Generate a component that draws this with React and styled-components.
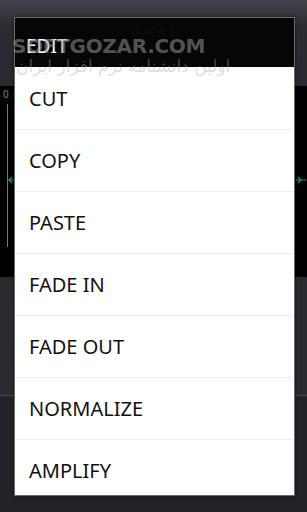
import React from "react";
import styled, { createGlobalStyle } from "styled-components";

const GlobalStyle = createGlobalStyle`
  html, body {
    margin: 0;
    padding: 0;
    background: #232127;
  }
  body {
    font-family: "Noto Sans", "Open Sans", "DejaVu Sans", sans-serif;
  }
`;

const Screen = styled.div`
  position: relative;
  width: 307px;
  height: 512px;
  overflow: hidden;
  display: flex;
  flex-direction: column;
`;

const Header = styled.div`
  height: 86px;
  background: linear-gradient(#45424b, #2e2b33 30%, #2a2830);
`;

const Track = styled.div`
  height: 191px;
  background: #000;
  display: flex;
  justify-content: space-between;
`;

const Ruler = styled.div`
  width: 14px;
  display: flex;
  flex-direction: column;
  align-items: flex-start;
  padding: 3px 0 0 3px;
  box-sizing: border-box;
`;

const ZeroLabel = styled.span`
  font-size: 10px;
  line-height: 11px;
  color: #1f9c9c;
`;

const TimeLine = styled.div`
  margin: 4px 0 0 4px;
  width: 1px;
  height: 143px;
  background: #777;
`;

const Marker = styled.svg`
  display: block;
  margin-top: ${(p) => p.$top}px;
`;

const RightEdge = styled.div`
  width: 11px;
  padding-top: 90px;
`;

const Panel = styled.div`
  height: 118px;
  background: #2b2930;
  border-bottom: 1px solid #49474d;
`;

const Footer = styled.div`
  flex: 1;
  background: #242228;
`;

const Dialog = styled.div`
  position: absolute;
  left: 14px;
  top: 17px;
  width: 279px;
  height: 477px;
  overflow: hidden;
  border: 1px solid #6b6b6b;
  box-shadow: 0 0 3px rgba(0, 0, 0, 0.6);
  background: #fff;
`;

const Title = styled.div`
  position: relative;
  height: 49px;
  background: #060606;
  color: #fff;
  font-size: 19px;
  line-height: 20px;
  padding: 18px 0 0 11px;
  box-sizing: border-box;
`;

const GhostTrack = styled.span`
  position: absolute;
  left: 114px;
  top: 4px;
  font-size: 11px;
  color: #08130c;
  letter-spacing: 0.5px;
`;

const List = styled.ul`
  list-style: none;
  margin: 0;
  padding: 0;
`;

const Item = styled.li`
  height: 62px;
  display: flex;
  align-items: center;
  padding-left: 13px;
  font-size: 20px;
  color: #111;
  margin: 0 1px;
  border-top: ${(p) => (p.$first ? "none" : "1px solid #ececec")};
  box-sizing: border-box;
`;

const Watermark = styled.div`
  position: absolute;
  left: 12px;
  top: 35px;
  pointer-events: none;
  display: flex;
  flex-direction: column;
  align-items: flex-start;
`;

const Brand = styled.span`
  font-family: "DejaVu Sans", sans-serif;
  font-weight: bold;
  font-size: 20px;
  line-height: 22px;
  letter-spacing: -0.3px;
  color: rgba(150, 150, 150, 0.55);
`;

const Tagline = styled.span`
  font-family: "DejaVu Sans", sans-serif;
  font-size: 17px;
  line-height: 18px;
  margin-left: 4px;
  color: rgba(170, 170, 170, 0.4);
  direction: rtl;
`;

const items = ["CUT", "COPY", "PASTE", "FADE IN", "FADE OUT", "NORMALIZE", "AMPLIFY"];

export default function App() {
  return (
    <>
      <GlobalStyle />
      <Screen>
        <Header />
        <Track>
          <Ruler>
            <ZeroLabel>0</ZeroLabel>
            <TimeLine>
              <Marker $top={72} width="8" height="8" viewBox="0 0 8 8">
                <path d="M0 4h8M5 1l-3 3 3 3" stroke="#2c8a8a" strokeWidth="1.2" fill="none" />
              </Marker>
            </TimeLine>
          </Ruler>
          <RightEdge>
            <Marker $top={0} width="10" height="8" viewBox="0 0 10 8">
              <path d="M0 4h10M2 1l3 3-3 3" stroke="#2c8a8a" strokeWidth="1.2" fill="none" />
            </Marker>
          </RightEdge>
        </Track>
        <Panel />
        <Footer />
        <Dialog>
          <Title>
            <GhostTrack>TRACK 2</GhostTrack>
            EDIT
          </Title>
          <List>
            {items.map((label, i) => (
              <Item key={label} $first={i === 0}>
                {label}
              </Item>
            ))}
          </List>
        </Dialog>
        <Watermark>
          <Brand>SOFTGOZAR.COM</Brand>
          <Tagline>اولین دانشنامه نرم افزار ایران</Tagline>
        </Watermark>
      </Screen>
    </>
  );
}
